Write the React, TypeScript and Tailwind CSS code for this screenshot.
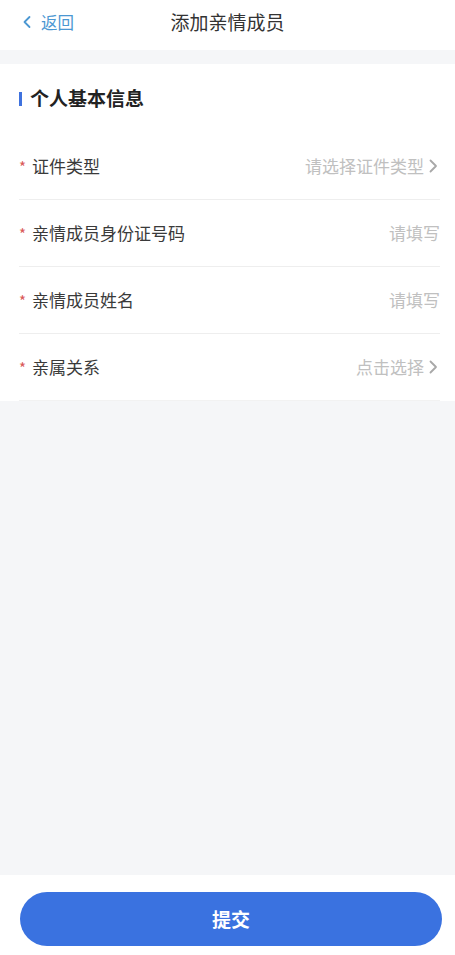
import React from "react";

const font = { fontFamily: '"Noto Sans CJK SC", "Noto Sans", sans-serif' };

function Chevron({ className }: { className?: string }) {
  return (
    <svg width="9" height="14" viewBox="0 0 9 14" className={className}>
      <path d="M1.5 1.5 L7 7 L1.5 12.5" fill="none" stroke="currentColor" strokeWidth="1.8" strokeLinecap="round" strokeLinejoin="round" />
    </svg>
  );
}

function Row({ label, value, arrow, last }: { label: string; value: string; arrow?: boolean; last?: boolean }) {
  return (
    <div className={`flex h-[67px] items-center justify-between ${last ? "border-b border-[#f2f2f2]" : "border-b border-[#eeeeee]"}`}>
      <div className="flex items-center">
        <span className="w-[13px] text-[15px] text-[#d95858] leading-none">*</span>
        <span className="text-[17px] text-[#3a3a3a]">{label}</span>
      </div>
      <div className="flex items-center text-[17px] text-[#c0c0c0]">
        <span>{value}</span>
        {arrow && <Chevron className="ml-[5px] mr-[2px] text-[#a8a8a8]" />}
      </div>
    </div>
  );
}

export default function App() {
  return (
    <div className="flex h-[955px] w-[455px] flex-col bg-[#f5f6f8]" style={font}>
      <header className="relative flex h-[50px] items-center justify-center bg-white">
        <div className="absolute left-[22px] top-0 flex h-[44px] items-center text-[#4b97d2]">
          <svg width="10" height="14" viewBox="0 0 10 14" className="mr-[9px]">
            <path d="M7.5 2 L2.5 7 L7.5 12" fill="none" stroke="currentColor" strokeWidth="1.8" strokeLinecap="round" strokeLinejoin="round" />
          </svg>
          <span className="text-[16.5px]">返回</span>
        </div>
        <h1 className="-mt-[6px] text-[19px] text-[#333333]">添加亲情成员</h1>
      </header>
      <div className="h-[14px]" />
      <section className="bg-white pl-[19px] pr-[15px]">
        <div className="flex h-[69px] items-center">
          <span className="mr-[8px] h-[14px] w-[3px] bg-[#3f72de]" />
          <span className="text-[19px] font-bold text-[#222222]">个人基本信息</span>
        </div>
        <Row label="证件类型" value="请选择证件类型" arrow />
        <Row label="亲情成员身份证号码" value="请填写" />
        <Row label="亲情成员姓名" value="请填写" />
        <Row label="亲属关系" value="点击选择" arrow last />
      </section>
      <div className="flex-1" />
      <footer className="flex h-[80px] bg-white pl-[20px] pt-[17px]">
        <button className="h-[54px] w-[422px] rounded-full bg-[#3a72e0] text-[19px] font-bold text-white">提交</button>
      </footer>
    </div>
  );
}
